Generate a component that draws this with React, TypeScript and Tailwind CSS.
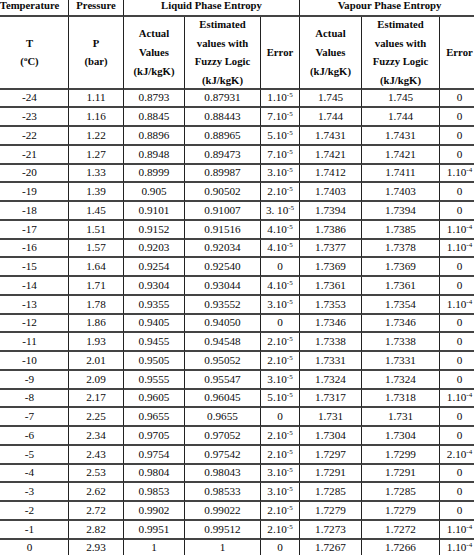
import React from "react";

type Row = [string, string, string, string, string, string, string, string];

const rows: Row[] = [
  ["-24", "1.11", "0.8793", "0.87931", "1.10|-5", "1.745", "1.745", "0"],
  ["-23", "1.16", "0.8845", "0.88443", "7.10|-5", "1.744", "1.744", "0"],
  ["-22", "1.22", "0.8896", "0.88965", "5.10|-5", "1.7431", "1.7431", "0"],
  ["-21", "1.27", "0.8948", "0.89473", "7.10|-5", "1.7421", "1.7421", "0"],
  ["-20", "1.33", "0.8999", "0.89987", "3.10|-5", "1.7412", "1.7411", "1.10|-4"],
  ["-19", "1.39", "0.905", "0.90502", "2.10|-5", "1.7403", "1.7403", "0"],
  ["-18", "1.45", "0.9101", "0.91007", "3. 10|-5", "1.7394", "1.7394", "0"],
  ["-17", "1.51", "0.9152", "0.91516", "4.10|-5", "1.7386", "1.7385", "1.10|-4"],
  ["-16", "1.57", "0.9203", "0.92034", "4.10|-5", "1.7377", "1.7378", "1.10|-4"],
  ["-15", "1.64", "0.9254", "0.92540", "0", "1.7369", "1.7369", "0"],
  ["-14", "1.71", "0.9304", "0.93044", "4.10|-5", "1.7361", "1.7361", "0"],
  ["-13", "1.78", "0.9355", "0.93552", "3.10|-5", "1.7353", "1.7354", "1.10|-4"],
  ["-12", "1.86", "0.9405", "0.94050", "0", "1.7346", "1.7346", "0"],
  ["-11", "1.93", "0.9455", "0.94548", "2.10|-5", "1.7338", "1.7338", "0"],
  ["-10", "2.01", "0.9505", "0.95052", "2.10|-5", "1.7331", "1.7331", "0"],
  ["-9", "2.09", "0.9555", "0.95547", "3.10|-5", "1.7324", "1.7324", "0"],
  ["-8", "2.17", "0.9605", "0.96045", "5.10|-5", "1.7317", "1.7318", "1.10|-4"],
  ["-7", "2.25", "0.9655", "0.9655", "0", "1.731", "1.731", "0"],
  ["-6", "2.34", "0.9705", "0.97052", "2.10|-5", "1.7304", "1.7304", "0"],
  ["-5", "2.43", "0.9754", "0.97542", "2.10|-5", "1.7297", "1.7299", "2.10|-4"],
  ["-4", "2.53", "0.9804", "0.98043", "3.10|-5", "1.7291", "1.7291", "0"],
  ["-3", "2.62", "0.9853", "0.98533", "3.10|-5", "1.7285", "1.7285", "0"],
  ["-2", "2.72", "0.9902", "0.99022", "2.10|-5", "1.7279", "1.7279", "0"],
  ["-1", "2.82", "0.9951", "0.99512", "2.10|-5", "1.7273", "1.7272", "1.10|-4"],
  ["0", "2.93", "1", "1", "0", "1.7267", "1.7266", "1.10|-4"],
];

function Val({ v }: { v: string }) {
  if (v.includes("|")) {
    const [base, exp] = v.split("|");
    return (
      <span className="whitespace-pre">
        {base}
        <sup className="text-[7px] relative -top-[4px] align-baseline leading-none">{exp}</sup>
      </span>
    );
  }
  return <span>{v}</span>;
}

const cell = "flex items-center justify-center text-center border-r border-r-[#222] border-b-2 border-b-[#444]";
const head = `${cell} font-bold text-[10.7px]`;

export default function App() {
  return (
    <div className="w-[474px] h-[555px] overflow-hidden bg-white text-[#0a0a0a]" style={{ fontFamily: '"Liberation Serif", "Times New Roman", serif' }}>
      <div className="-ml-[9px] -mt-[5px] w-[489px] grid grid-cols-[78px_55px_61px_76px_39px_62px_78px_40px] grid-rows-[22px_72.5px_repeat(25,18.75px)] text-[11.2px]">
        <div className={head}>Temperature</div>
        <div className={head}>Pressure</div>
        <div className={`${head} col-span-3`}>Liquid Phase Entropy</div>
        <div className={`${head} col-span-3`}>Vapour Phase Entropy</div>

        <div className={`${head} flex-col leading-[18.6px]`}>
          <span>T</span>
          <span>
            (<sup className="text-[7px] relative -top-[4px] align-baseline leading-none">o</sup>C)
          </span>
        </div>
        <div className={`${head} flex-col leading-[18.6px]`}>
          <span>P</span>
          <span>(bar)</span>
        </div>
        <div className={`${head} flex-col leading-[18.6px]`}>
          <span>Actual</span>
          <span>Values</span>
          <span>(kJ/kgK)</span>
        </div>
        <div className={`${head} flex-col leading-[18.6px]`}>
          <span>Estimated</span>
          <span>values with</span>
          <span>Fuzzy Logic</span>
          <span>(kJ/kgK)</span>
        </div>
        <div className={head}>Error</div>
        <div className={`${head} flex-col leading-[18.6px]`}>
          <span>Actual</span>
          <span>Values</span>
          <span>(kJ/kgK)</span>
        </div>
        <div className={`${head} flex-col leading-[18.6px]`}>
          <span>Estimated</span>
          <span>values with</span>
          <span>Fuzzy Logic</span>
          <span>(kJ/kgK)</span>
        </div>
        <div className={head}>Error</div>

        {rows.map((r, i) =>
          r.map((v, j) => (
            <div key={`${i}-${j}`} className={cell}>
              <Val v={v} />
            </div>
          ))
        )}
      </div>
    </div>
  );
}
